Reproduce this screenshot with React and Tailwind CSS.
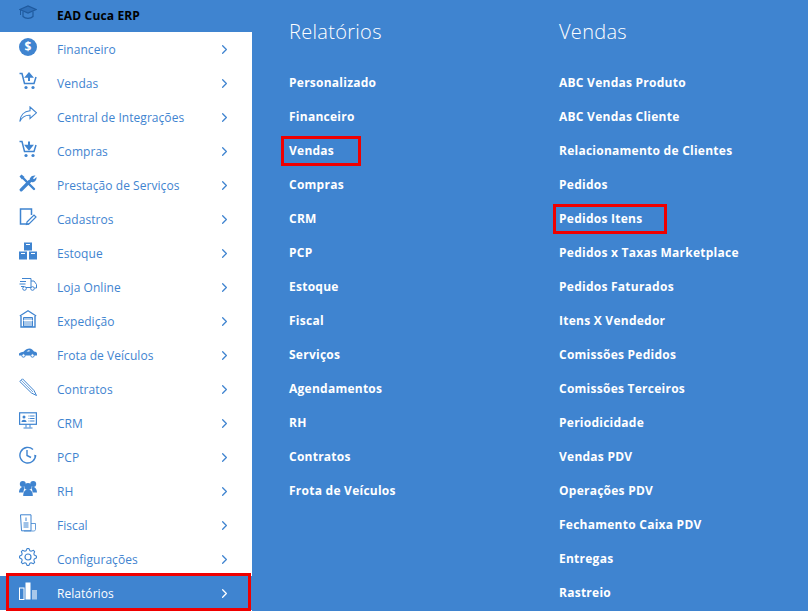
import { ChevronRight } from 'lucide-react'

const blue = '#3f84d0'

function Svg({ children }) {
  return (
    <svg viewBox="0 0 18 18" className="w-[18px] h-[18px] text-[#3f84d0]" fill="none" stroke="currentColor" strokeWidth="1.2">
      {children}
    </svg>
  )
}

// cog outline, 8 teeth
const gearPath = Array.from({ length: 32 }, (_, i) => {
  const step = i % 4
  const r = step === 0 || step === 1 ? 8.6 : 6.6
  const a = ((i - 0.5) * Math.PI * 2) / 32
  return `${i === 0 ? 'M' : 'L'}${(9 + r * Math.cos(a)).toFixed(2)} ${(9 + r * Math.sin(a)).toFixed(2)}`
}).join(' ') + 'z'

const Cap = () => (
  <Svg>
    <path d="M0.800 4.500L9 1l8.200 3.500L9 8z" fill="#2f70ba" stroke="#1f5a9e" />
    <path d="M4 6.500v5c2.500 2.500 7.500 2.500 10 0v-5" stroke="#1f5a9e" />
    <path d="M1.500 5v5" stroke="#1f5a9e" strokeWidth="1" />
  </Svg>
)
const Dollar = () => (
  <svg viewBox="0 0 18 18" className="w-[18px] h-[18px]">
    <circle cx="9" cy="9" r="9" fill={blue} />
    <text x="9" y="13.200" textAnchor="middle" fontSize="12" fontWeight="700" fill="#fff" fontFamily="'Open Sans', sans-serif">$</text>
  </svg>
)
const Cart = ({ up }) => (
  <Svg>
    <path d="M0.500 1.500h2.500l2.500 10h9.500l2-6.500" strokeWidth="1.500" />
    <circle cx="7" cy="15.500" r="1.600" fill={blue} stroke="none" />
    <circle cx="14" cy="15.500" r="1.600" fill={blue} stroke="none" />
    {up
      ? <path d="M10 9V4M7.200 4.800L10 1.500l2.800 3.300z" fill={blue} strokeWidth="2" />
      : <path d="M10 1.500v5M7.200 5.800L10 9.200l2.800-3.400z" fill={blue} strokeWidth="2" />}
  </Svg>
)
const Share = () => (
  <Svg>
    <path d="M11 1L17.500 6.800 11 12.500V9.300C6.500 9 3 11 0.800 15.500 1.200 9.500 5 5.300 11 4.800z" strokeWidth="1.100" />
  </Svg>
)
const Tools = () => (
  <Svg>
    <path d="M2.200 15.800L10.500 7.500" strokeWidth="3.200" strokeLinecap="round" />
    <path d="M11 7.500c-1.200-2.500.8-6.500 5.500-6l-2.500 2.700 1 1 2.500-2.200c.5 4.200-3.500 6.500-6.500 4.500z" fill={blue} stroke="none" />
    <path d="M3.500 3.500L15 15" strokeWidth="2.400" strokeLinecap="round" />
    <path d="M0.500 2.500L2.500.5l3 2.500-2.500 2.500z" fill={blue} stroke="none" />
  </Svg>
)
const Note = () => (
  <Svg>
    <path d="M10 16H1.500V1h11v6" strokeWidth="1.500" />
    <path d="M8 14l7-7 2 2-7 7-2.500.5z" strokeWidth="1.200" />
  </Svg>
)
const Boxes = () => (
  <svg viewBox="0 0 18 18" className="w-[18px] h-[18px]" fill={blue}>
    <rect x="5" y="0.500" width="8" height="8" />
    <rect x="0" y="9.500" width="8" height="8" />
    <rect x="10" y="9.500" width="8" height="8" />
    <rect x="7" y="2" width="4" height="1" fill="#fff" />
    <rect x="2" y="11" width="4" height="1" fill="#fff" />
    <rect x="12" y="11" width="4" height="1" fill="#fff" />
  </svg>
)
const Truck = () => (
  <Svg>
    <path d="M3 2.500h9v9H7M12 5h3l2.500 3.500V12h-2" strokeWidth="1" />
    <path d="M1 5.500h6M0.500 8h6M2 10.500h3" strokeWidth="1.200" />
    <circle cx="5.500" cy="12.500" r="1.800" strokeWidth="1" />
    <circle cx="13.500" cy="12.500" r="1.800" strokeWidth="1" />
  </Svg>
)
const Warehouse = () => (
  <Svg>
    <path d="M0.800 6L9 0.800 17.200 6" strokeWidth="1.200" />
    <path d="M2 6v11h14V6" strokeWidth="1.400" />
    <path d="M4.500 7.500h9v9h-9z" fill={blue} fillOpacity=".45" strokeWidth="1" />
    <path d="M4.500 10.500h9" stroke="#fff" />
  </Svg>
)
const Car = () => (
  <svg viewBox="0 0 18 18" className="w-[18px] h-[18px]" fill={blue}>
    <path d="M0 9.500c1.500-1.200 3-1.500 4.500-1.700C6.500 5.500 8.500 4.500 10.500 4.500c2 0 3.500 1.500 4.500 3 1.500.2 3 .8 3 2V11.500H0z" />
    <path d="M7.500 7.500c1-1 2-1.500 3-1.500v1.500z" fill="#fff" />
    <circle cx="4.500" cy="11.500" r="1.700" fill="#fff" stroke={blue} />
    <circle cx="13.500" cy="11.500" r="1.700" fill="#fff" stroke={blue} />
  </svg>
)
const Pen = () => (
  <Svg>
    <path d="M0.800 3.500L3.500.8 15 12.500l2.500 5-5-2.500z" strokeWidth="1" />
    <path d="M2.200 2.200L14 14" strokeWidth="1" opacity=".7" />
  </Svg>
)
const Monitor = () => (
  <Svg>
    <rect x="0.600" y="0.800" width="16.800" height="11.500" strokeWidth="1.200" />
    <circle cx="5" cy="5" r="1.500" fill={blue} stroke="none" />
    <path d="M2.500 10c0-3 5-3 5 0z" fill={blue} stroke="none" />
    <path d="M9.500 4h6M9.500 6.500h6M9.500 9h6" strokeWidth="1" strokeDasharray="1 .6 5" />
    <path d="M7 12.500v3M11 12.500v3M4.500 16h9" strokeWidth="1" />
  </Svg>
)
const Clock = () => (
  <Svg>
    <path d="M16.500 9A7.800 7.800 0 1 1 14 3.500" strokeWidth="1.400" />
    <path d="M8 4v5.500l4 2" strokeWidth="1.400" />
    <path d="M15 8.500l2.500 1.500-1.500 1.500z" fill={blue} stroke="none" />
  </Svg>
)
const People = () => (
  <svg viewBox="0 0 18 18" className="w-[18px] h-[18px]" fill={blue}>
    <circle cx="3.800" cy="4" r="3" />
    <circle cx="14.200" cy="4" r="3" />
    <path d="M0 12.500c0-3 1.500-5.500 3.800-5.500 1 0 1.500.3 2 .8-1 1.500-1.300 3-1.300 4.700z" />
    <path d="M18 12.500c0-3-1.500-5.500-3.800-5.500-1 0-1.500.3-2 .8 1 1.500 1.300 3 1.300 4.700z" />
    <circle cx="9" cy="6.500" r="3.500" />
    <path d="M4.200 16c0-4 1.500-6.500 4.800-6.500s4.800 2.500 4.800 6.500z" />
  </svg>
)
const Receipt = () => (
  <Svg>
    <path d="M1.500 0.800h10.500v16H2.500z" strokeWidth="1" />
    <path d="M12 9.500h4.500v6c0 1-1 1.500-2 1.500H5" strokeWidth="1" opacity=".8" />
    <path d="M7 3.500v3.500M4.500 9h5M4.500 11h5M4.500 13h5" strokeWidth="1" />
  </Svg>
)
const Gear = () => (
  <Svg>
    <circle cx="9" cy="9" r="3" strokeWidth="1.200" />
    <path d={gearPath} strokeWidth="1.100" strokeLinejoin="round" />
  </Svg>
)
const Bars = () => (
  <svg viewBox="0 0 18 18" className="w-[18px] h-[18px]">
    <rect x="0.500" y="6" width="4.500" height="11.500" fill="none" stroke="#fff" />
    <rect x="6.500" y="0.500" width="5" height="17" fill="#fff" />
    <rect x="13" y="8" width="5" height="9.500" fill="#fff" fillOpacity=".55" />
  </svg>
)

const menu = [
  ['Financeiro', <Dollar />],
  ['Vendas', <Cart up />],
  ['Central de Integrações', <Share />],
  ['Compras', <Cart />],
  ['Prestação de Serviços', <Tools />],
  ['Cadastros', <Note />],
  ['Estoque', <Boxes />],
  ['Loja Online', <Truck />],
  ['Expedição', <Warehouse />],
  ['Frota de Veículos', <Car />],
  ['Contratos', <Pen />],
  ['CRM', <Monitor />],
  ['PCP', <Clock />],
  ['RH', <People />],
  ['Fiscal', <Receipt />],
  ['Configurações', <Gear />],
]

const relatorios = ['Personalizado', 'Financeiro', 'Vendas', 'Compras', 'CRM', 'PCP', 'Estoque', 'Fiscal', 'Serviços', 'Agendamentos', 'RH', 'Contratos', 'Frota de Veículos']
const vendas = ['ABC Vendas Produto', 'ABC Vendas Cliente', 'Relacionamento de Clientes', 'Pedidos', 'Pedidos Itens', 'Pedidos x Taxas Marketplace', 'Pedidos Faturados', 'Itens X Vendedor', 'Comissões Pedidos', 'Comissões Terceiros', 'Periodicidade', 'Vendas PDV', 'Operações PDV', 'Fechamento Caixa PDV', 'Entregas', 'Rastreio']

function MenuRow({ label, icon, active }) {
  return (
    <div className={`relative h-[34px] flex items-center pl-[19px] pr-[20px] ${active ? 'bg-[#3f84d0] text-white' : 'text-[#3f84d0]'}`}>
      <span className="w-[38px] -mt-1 shrink-0">{icon}</span>
      <span className="flex-1 text-[12px] tracking-[0.05px] mt-[1px]">{label}</span>
      <ChevronRight className="w-[15px] h-[15px]" strokeWidth={2} />
      {active && <span className="absolute left-[6px] right-[1px] top-[-3px] bottom-[-1px] border-[3px] border-[#f00000]" />}
    </div>
  )
}

function Column({ title, items, boxed, boxClass, className }) {
  return (
    <div className={className}>
      <h2 className="h-[65px] pt-[17px] text-[20px] leading-[30px] font-light tracking-[0.3px]">{title}</h2>
      {items.map((item) => (
        <div key={item} className="relative h-[34px] pt-[2px] flex items-center text-[12px] font-bold tracking-[0.25px]">
          {item}
          {item === boxed && <span className={`absolute top-[3px] h-[30px] border-[3px] border-[#f00000] ${boxClass}`} />}
        </div>
      ))}
    </div>
  )
}

export default function App() {
  return (
    <div className="w-[808px] h-[611px] overflow-hidden flex bg-[#3f84d0] text-white font-['Open_Sans',sans-serif]">
      <aside className="w-[252px] shrink-0 bg-white">
        <div className="h-[32px] bg-[#3f84d0] flex items-center pl-[19px]">
          <span className="w-[38px] -mt-1"><Cap /></span>
          <span className="text-[12px] font-bold tracking-[0.15px] text-black -mt-[1px]">EAD Cuca ERP</span>
        </div>
        {menu.map(([label, icon]) => <MenuRow key={label} label={label} icon={icon} />)}
        <MenuRow label="Relatórios" icon={<Bars />} active />
      </aside>
      <Column title="Relatórios" items={relatorios} boxed="Vendas" boxClass="left-[-8px] w-[80px]" className="w-[307px] pl-[37px]" />
      <Column title="Vendas" items={vendas} boxed="Pedidos Itens" boxClass="left-[-6px] w-[114px]" className="flex-1" />
    </div>
  )
}
